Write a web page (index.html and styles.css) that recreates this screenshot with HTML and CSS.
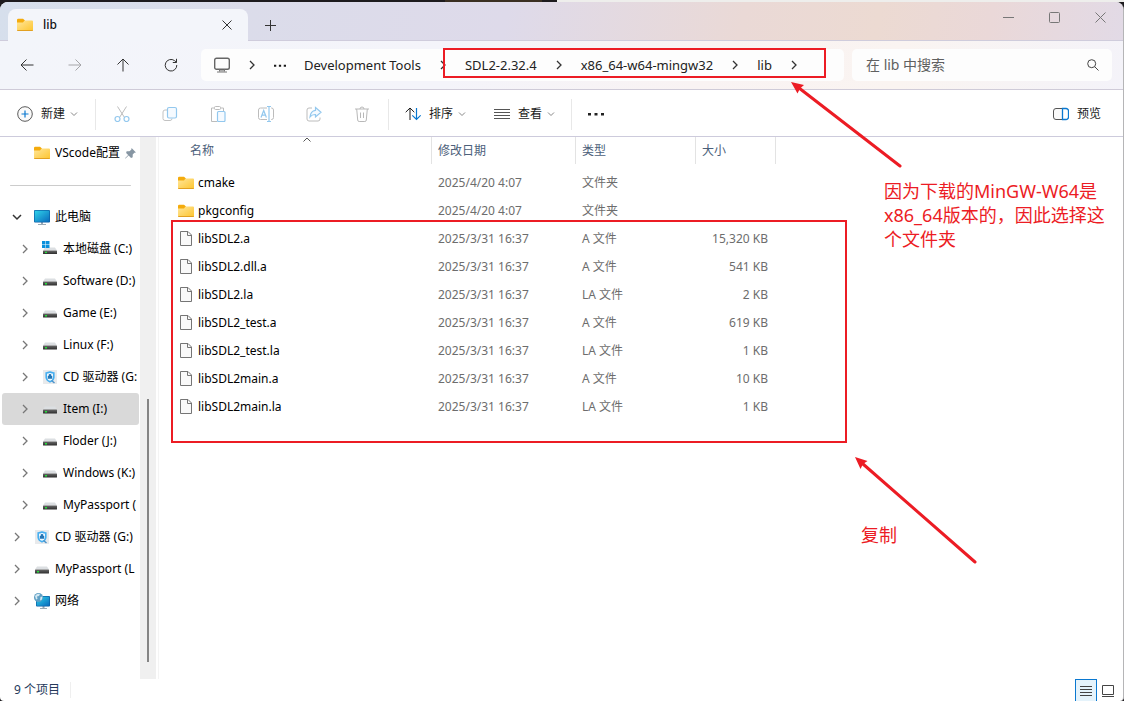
FILE: index.html
```html
<!DOCTYPE html>
<html lang="zh-CN">
<head>
<meta charset="utf-8">
<title>lib</title>
<link rel="stylesheet" href="styles.css">
</head>
<body>
<svg class="defs" aria-hidden="true">
  <defs>
    <linearGradient id="gFolder" x1="0" y1="0" x2="1" y2="1"><stop offset="0" stop-color="#ffe69c"/><stop offset="1" stop-color="#fdc52e"/></linearGradient>
    <linearGradient id="gScreen" x1="0" y1="0" x2="1" y2="1"><stop offset="0" stop-color="#2fd3ea"/><stop offset="1" stop-color="#0a6bbd"/></linearGradient>
    <linearGradient id="gDrive" x1="0" y1="0" x2="0" y2="1"><stop offset="0" stop-color="#6a6a6a"/><stop offset="1" stop-color="#2c2c2c"/></linearGradient>
    <symbol id="folder" viewBox="0 0 16 16"><path d="M0 3a1.200 1.200 0 0 1 1.200-1.200H6L8 3.500v4H0z" fill="#f4ab0c"/><path d="M0 5.500h6L7.500 3.500H15a1 1 0 0 1 1 1V13a1 1 0 0 1-1 1H1a1 1 0 0 1-1-1z" fill="url(#gFolder)"/><path d="M0 13a1 1 0 0 0 1 1h14a1 1 0 0 0 1-1z" fill="#e2a021"/></symbol>
    <symbol id="file" viewBox="0 0 16 16"><path d="M2.500.500h7.500l3.500 3.500v10.500h-11z" fill="#f9f9f9" stroke="#757575"/><path d="M9.500.500v4h4" fill="none" stroke="#757575"/></symbol>
    <symbol id="drive" viewBox="0 0 16 16"><path d="M3 5.500h10l2 3H1z" fill="#dcdfe2"/><rect x="1" y="8.500" width="14" height="4" rx=".5" fill="url(#gDrive)"/><rect x="3" y="10" width="2" height="1.500" fill="#25e03a"/></symbol>
    <symbol id="sysdrive" viewBox="0 0 16 16"><path d="M3 6.500h10l2 3H1z" fill="#dcdfe2"/><rect x="1" y="9.500" width="14" height="3.500" rx=".5" fill="url(#gDrive)"/><rect x="3" y="10.800" width="2" height="1.300" fill="#25e03a"/><path d="M0 0h3.500v3.200H0zM4 0h3.500v3.200H4zM0 3.800h3.500V7H0zM4 3.800h3.500V7H4z" fill="#0a90dc"/></symbol>
    <symbol id="disc" viewBox="0 0 16 16"><rect x="1" y="1" width="14" height="14" fill="#e8eaec"/><path d="M8 3q2 .8 3.800 1v4.500q-.3 3-3.800 4.300-3.500-1.300-3.800-4.300V4q1.800-.2 3.800-1z" fill="#eef8ff" stroke="#45aef0" stroke-width="1.600"/><path d="M6.600 6.500a1.400 1.400 0 0 1 2.800 0v.5h.8v2.800H5.800V7h.8z" fill="#2375b5"/><path d="M9.500 11.500l3 2.500" stroke="#4b92c9" stroke-width="1.500"/></symbol>
    <symbol id="monitor" viewBox="0 0 16 16"><path d="M7 13h2v2h3v1H4v-1h3z" fill="#9aa9b5"/><rect y="1" width="16" height="12.500" rx="1" fill="#0b5fa5"/><rect x=".7" y="1.700" width="14.600" height="11.100" fill="url(#gScreen)"/></symbol>
    <symbol id="network" viewBox="0 0 16 16"><path d="M8.500 13h2v2h2.500v1H6v-1h2.500z" fill="#9aa9b5"/><rect x="2" y="3" width="14" height="10.500" rx="1" fill="#0b5fa5"/><rect x="2.700" y="3.700" width="12.600" height="9.100" fill="url(#gScreen)"/><circle cx="4.500" cy="4.500" r="4.500" fill="#5f9fc4"/><path d="M1 3q2-3 5-2L5 3 3 3.500 3.500 6 2 6.500zM6.500 4l2-.5-.5 3-2 1z" fill="#d3e8f2"/></symbol>
    <symbol id="right" viewBox="0 0 8 10"><path d="M2 1l4 4-4 4" fill="none" stroke="currentColor" stroke-width="1.300"/></symbol>
    <symbol id="down" viewBox="0 0 8 8"><path d="M1 2.500l3 3 3-3" fill="none" stroke="currentColor"/></symbol>
    <symbol id="dots" viewBox="0 0 16 4"><path d="M0 1h3v2.500H0zM6.500 1h3v2.500h-3zM13 1h3v2.500h-3z" fill="currentColor"/></symbol>
  </defs>
</svg>

<div class="backdrop"></div>
<div class="window">
  <header class="titlebar">
    <div class="tab">
      <svg class="i16"><use href="#folder"/></svg>
      <span class="tab-name">lib</span>
      <button class="plain" aria-label="关闭标签页"><svg width="10" height="10" viewBox="0 0 10 10"><path d="M.5.5l9 9m0-9l-9 9" class="ln"/></svg></button>
    </div>
    <button class="plain newtab" aria-label="新建标签页"><svg width="11" height="11" viewBox="0 0 11 11"><path d="M5.500 0v11M0 5.500h11" class="ln"/></svg></button>
    <div class="controls">
      <button class="plain" aria-label="最小化"><svg width="11" height="11" viewBox="0 0 11 11"><path d="M0 5.500h11" class="ln"/></svg></button>
      <button class="plain" aria-label="最大化"><svg width="11" height="11" viewBox="0 0 11 11"><rect x=".5" y=".5" width="10" height="10" rx="1" class="ln"/></svg></button>
      <button class="plain" aria-label="关闭"><svg width="11" height="11" viewBox="0 0 11 11"><path d="M.5.5l10 10m0-10l-10 10" class="ln"/></svg></button>
    </div>
  </header>

  <div class="navbar">
    <button class="plain nav" aria-label="后退"><svg width="14" height="14" viewBox="0 0 14 14"><path d="M6.500 1.500L1 7l5.500 5.500M1 7h12.500" class="ln"/></svg></button>
    <button class="plain nav off" aria-label="前进"><svg width="14" height="14" viewBox="0 0 14 14"><path d="M7.500 1.500L13 7l-5.500 5.500M13 7H.5" class="ln"/></svg></button>
    <button class="plain nav" aria-label="向上"><svg width="14" height="14" viewBox="0 0 14 14"><path d="M1.500 6.500L7 1l5.500 5.500M7 1v12.500" class="ln"/></svg></button>
    <button class="plain nav" aria-label="刷新"><svg width="14" height="14" viewBox="0 0 14 14"><path d="M12.800 7A5.800 5.800 0 1 1 10.500 2.600L12.500 4.200M12.500.8v3.700H8.800" class="ln"/></svg></button>
    <nav class="address" aria-label="地址">
      <svg class="pc" viewBox="0 0 16 16"><rect x=".7" y="1.200" width="14.600" height="11.100" rx="1.800" fill="none" stroke="#666" stroke-width="1.400"/><path d="M5.500 12.500v2M10.500 12.500v2M3 15h10" stroke="#777" fill="none"/><path d="M6 13h4v2H6z" fill="#aaa"/></svg>
      <svg class="sep"><use href="#right"/></svg>
      <svg class="ell"><use href="#dots"/></svg>
      <a href="#dev">Development Tools</a>
      <svg class="sep"><use href="#right"/></svg>
      <a href="#sdl">SDL2-2.32.4</a>
      <svg class="sep"><use href="#right"/></svg>
      <a href="#mingw">x86_64-w64-mingw32</a>
      <svg class="sep"><use href="#right"/></svg>
      <a href="#lib">lib</a>
      <svg class="sep"><use href="#right"/></svg>
    </nav>
    <label class="search">
      <input type="text" placeholder="在 lib 中搜索" aria-label="搜索">
      <svg width="12" height="12" viewBox="0 0 12 12"><circle cx="4.700" cy="4.700" r="4" class="ln"/><path d="M7.700 7.700l3.800 3.800" class="ln"/></svg>
    </label>
  </div>

  <div class="toolbar">
    <button class="plain cmd new"><svg class="i16" viewBox="0 0 16 16"><circle cx="8" cy="8" r="7.300" fill="#fafafa" stroke="#5a5a5a"/><path d="M8 4.500v7M4.500 8h7" stroke="#0a78d0" stroke-width="1.200"/></svg>新建<svg class="dn"><use href="#down"/></svg></button>
    <span class="bar"></span>
    <div class="tools">
      <button class="plain" aria-label="剪切"><svg class="i16" viewBox="0 0 16 16"><path d="M3.500.5L10.500 11.500M12.500.5L5.500 11.500" stroke="#bcbcbc" fill="none"/><g stroke="#93c8ee" stroke-width="1.200" fill="#fff"><circle cx="3.500" cy="13" r="2.500"/><circle cx="12.500" cy="13" r="2.500"/></g></svg></button>
      <button class="plain" aria-label="复制"><svg class="i16" viewBox="0 0 16 16"><path d="M5 4H3a2 2 0 0 0-2 2v6.500a2 2 0 0 0 2 2h5a2 2 0 0 0 2-2" stroke="#c2c2c2" fill="none"/><rect x="5.500" y="1.500" width="9" height="10.500" rx="1.500" stroke="#93c8ee" stroke-width="1.200" fill="#f5faff"/></svg></button>
      <button class="plain" aria-label="粘贴"><svg class="i16" viewBox="0 0 16 16"><path d="M5 2H1.500v13.500H7M10 2h3.500v3" stroke="#bcbcbc" fill="none"/><rect x="4.500" y=".5" width="6" height="3" rx="1" stroke="#bcbcbc" fill="#fff"/><rect x="7.500" y="5.500" width="7.500" height="10" rx="1" stroke="#93c8ee" stroke-width="1.200" fill="#f5faff"/></svg></button>
      <button class="plain" aria-label="重命名"><svg class="i16" viewBox="0 0 16 16"><path d="M9 2H2.500a2 2 0 0 0-2 2v7.500a2 2 0 0 0 2 2H9M13 2h.5a2 2 0 0 1 2 2v7.500a2 2 0 0 1-2 2H13" stroke="#bcbcbc" fill="none"/><path d="M11 .5v15M9 .5h4M9 15.500h4M3 11.500L5.700 4.500 8.400 11.500M4 9.200h3.500" stroke="#93c8ee" stroke-width="1.200" fill="none"/></svg></button>
      <button class="plain" aria-label="共享"><svg class="i16" viewBox="0 0 16 16"><path d="M6 2H3a2 2 0 0 0-2 2v9a2 2 0 0 0 2 2h9a2 2 0 0 0 2-2v-1.500" stroke="#bcbcbc" fill="none"/><path d="M9.500 1.500L15 6.300 9.500 11V8.500Q6 8.300 4 11 4.500 5 9.500 4.300z" stroke="#93c8ee" stroke-width="1.200" fill="#f5faff"/></svg></button>
      <button class="plain" aria-label="删除"><svg class="i16" viewBox="0 0 16 16"><path d="M1 3h14M6 3a2 2 0 0 1 4 0M2.700 3l1 11a1.500 1.500 0 0 0 1.500 1.500h5.600a1.500 1.500 0 0 0 1.500-1.500l1-11M6.500 6.500v5.500M9.500 6.500v5.500" stroke="#b8b8b8" fill="none"/></svg></button>
    </div>
    <span class="bar"></span>
    <button class="plain cmd sort"><svg class="i16" viewBox="0 0 16 16"><path d="M5 14V2M.7 6.200L5 2l4.300 4.200" class="ln"/><path d="M11.500 2v11.500M7.300 9.300l4.200 4.200 4.200-4.200" stroke="#0a78d0" stroke-width="1.200" fill="none"/></svg>排序<svg class="dn"><use href="#down"/></svg></button>
    <button class="plain cmd view"><svg class="i16" viewBox="0 0 16 16"><path d="M0 3.500h16M0 6.500h16M0 9.500h16M0 12.500h16" stroke="#555"/></svg>查看<svg class="dn"><use href="#down"/></svg></button>
    <span class="bar"></span>
    <button class="plain more" aria-label="更多"><svg width="16" height="4"><use href="#dots"/></svg></button>
    <button class="plain cmd preview"><svg class="i16" viewBox="0 0 16 16"><path d="M9 2.500H3a2.500 2.500 0 0 0-2.500 2.500v6A2.500 2.500 0 0 0 3 13.500h6" stroke="#555" fill="#fafafa"/><path d="M9.500 2.500H13a2.500 2.500 0 0 1 2.500 2.500v6a2.500 2.500 0 0 1-2.500 2.500H9.500z" stroke="#0a78d0" stroke-width="1.300" fill="#fff"/></svg>预览</button>
  </div>

  <div class="content">
    <aside class="side">
      <ul class="tree">
        <li class="top quick"><svg class="i16"><use href="#folder"/></svg><span>VScode配置</span><svg class="pin" viewBox="0 0 10 10"><path d="M6 0l4 4-1.500.3L7 6v2.500L5.500 9 3.300 6.800.5 9.500 0 9.300l2.900-2.900L1 4.500 1.500 3 4 3l1.700-1.500z" fill="#8796a3"/></svg></li>
        <li class="rule"></li>
        <li class="top"><svg class="ch dk" viewBox="0 0 10 10"><path d="M1 3l4 4 4-4" fill="none" stroke="#333" stroke-width="1.500"/></svg><svg class="i16"><use href="#monitor"/></svg><span>此电脑</span></li>
        <li><svg class="ch"><use href="#right"/></svg><svg class="i16"><use href="#sysdrive"/></svg><span>本地磁盘 (C:)</span></li>
        <li><svg class="ch"><use href="#right"/></svg><svg class="i16"><use href="#drive"/></svg><span>Software (D:)</span></li>
        <li><svg class="ch"><use href="#right"/></svg><svg class="i16"><use href="#drive"/></svg><span>Game (E:)</span></li>
        <li><svg class="ch"><use href="#right"/></svg><svg class="i16"><use href="#drive"/></svg><span>Linux (F:)</span></li>
        <li><svg class="ch"><use href="#right"/></svg><svg class="i16"><use href="#disc"/></svg><span>CD 驱动器 (G:</span></li>
        <li class="sel"><svg class="ch"><use href="#right"/></svg><svg class="i16"><use href="#drive"/></svg><span>Item (I:)</span></li>
        <li><svg class="ch"><use href="#right"/></svg><svg class="i16"><use href="#drive"/></svg><span>Floder (J:)</span></li>
        <li><svg class="ch"><use href="#right"/></svg><svg class="i16"><use href="#drive"/></svg><span>Windows (K:)</span></li>
        <li><svg class="ch"><use href="#right"/></svg><svg class="i16"><use href="#drive"/></svg><span>MyPassport (</span></li>
        <li class="top"><svg class="ch"><use href="#right"/></svg><svg class="i16"><use href="#disc"/></svg><span>CD 驱动器 (G:)</span></li>
        <li class="top"><svg class="ch"><use href="#right"/></svg><svg class="i16"><use href="#drive"/></svg><span>MyPassport (L</span></li>
        <li class="top"><svg class="ch"><use href="#right"/></svg><svg class="i16"><use href="#network"/></svg><span>网络</span></li>
      </ul>
      <div class="scroll"><span class="thumb"></span></div>
    </aside>

    <main class="files">
      <table>
        <colgroup><col class="c-name"><col class="c-date"><col class="c-type"><col class="c-size"></colgroup>
        <thead><tr><th>名称<svg class="asc" viewBox="0 0 8 5"><path d="M.5 4.500L4 1l3.500 3.500" class="ln"/></svg></th><th>修改日期</th><th>类型</th><th>大小</th></tr></thead>
        <tbody>
          <tr><td><svg class="i16"><use href="#folder"/></svg>cmake</td><td>2025/4/20 4:07</td><td>文件夹</td><td></td></tr>
          <tr><td><svg class="i16"><use href="#folder"/></svg>pkgconfig</td><td>2025/4/20 4:07</td><td>文件夹</td><td></td></tr>
          <tr><td><svg class="i16"><use href="#file"/></svg>libSDL2.a</td><td>2025/3/31 16:37</td><td>A 文件</td><td>15,320 KB</td></tr>
          <tr><td><svg class="i16"><use href="#file"/></svg>libSDL2.dll.a</td><td>2025/3/31 16:37</td><td>A 文件</td><td>541 KB</td></tr>
          <tr><td><svg class="i16"><use href="#file"/></svg>libSDL2.la</td><td>2025/3/31 16:37</td><td>LA 文件</td><td>2 KB</td></tr>
          <tr><td><svg class="i16"><use href="#file"/></svg>libSDL2_test.a</td><td>2025/3/31 16:37</td><td>A 文件</td><td>619 KB</td></tr>
          <tr><td><svg class="i16"><use href="#file"/></svg>libSDL2_test.la</td><td>2025/3/31 16:37</td><td>LA 文件</td><td>1 KB</td></tr>
          <tr><td><svg class="i16"><use href="#file"/></svg>libSDL2main.a</td><td>2025/3/31 16:37</td><td>A 文件</td><td>10 KB</td></tr>
          <tr><td><svg class="i16"><use href="#file"/></svg>libSDL2main.la</td><td>2025/3/31 16:37</td><td>LA 文件</td><td>1 KB</td></tr>
        </tbody>
      </table>
    </main>
  </div>

  <footer class="status">
    <span class="count">9 个项目</span>
    <button class="plain mode on" aria-label="详细信息"><svg width="12" height="12" viewBox="0 0 12 12"><path d="M0 1.500h12M0 4.500h12M0 7.500h12M0 10.500h12" stroke="#444"/></svg></button>
    <button class="plain mode" aria-label="大图标"><svg width="12" height="12" viewBox="0 0 12 12"><path d="M.5.5h11v9H.5zM0 11.500h12" stroke="#444" fill="none"/></svg></button>
  </footer>
</div>

<div class="mark mark-path"></div>
<div class="mark mark-files"></div>
<svg class="arrows" width="1124" height="701" viewBox="0 0 1124 701" aria-hidden="true">
  <g stroke="#ec1c24" stroke-width="3" stroke-linecap="round"><path d="M799 88L900 166M863 464L975 562"/></g>
  <path d="M791 82l13 3-4 3.500-2.500 5zM855 457l12.500 4-4.500 3-2.500 5z" fill="#ec1c24"/>
</svg>
<p class="note note-arch">因为下载的MinGW-W64是<br>x86_64版本的，因此选择这<br>个文件夹</p>
<p class="note note-copy">复制</p>
</body>
</html>
```

FILE: styles.css
```css
* { box-sizing: border-box; }
body {
  margin: 0;
  height: 100vh;
  display: flex;
  flex-direction: column;
  position: relative;
  overflow: hidden;
  background: #1d1b1e;
  color: #1a1a1a;
  font: 12px/16px "Noto Sans", "Noto Sans CJK SC", sans-serif;
}
.defs { position: absolute; width: 0; height: 0; }
svg { display: block; flex: none; }
.i16 { width: 16px; height: 16px; }
.ln { fill: none; stroke: currentColor; stroke-width: 1; }
.plain {
  display: flex;
  align-items: center;
  justify-content: center;
  padding: 0;
  border: 0;
  background: none;
  color: #333;
  font: inherit;
}

.backdrop {
  height: 2px;
  flex: none;
  background: linear-gradient(90deg, #1d1b1e 445px, #3a2f22 445px 542px, #1d1b1e 542px 557px, #eeeeec 557px);
}
.window {
  flex: 1;
  min-height: 0;
  display: flex;
  flex-direction: column;
  overflow: hidden;
  border-right: 1px solid #b5b5b7;
  border-radius: 8px 8px 4px 4px;
  background: #fff;
}

.titlebar {
  display: flex;
  height: 39px;
  flex: none;
  padding: 7px 0 0 8px;
  background: linear-gradient(100deg, #d6dfec, #dbdcea 22%, #dedaea 45%, #ead9d6 66%, #ecdad2 78%, #ead8d8 88%, #e2dae6);
  box-shadow: inset 0 -1px #cfccdc;
}
.tab {
  display: flex;
  align-items: center;
  width: 240px;
  padding: 0 16px 0 9px;
  border-radius: 8px 8px 0 0;
  background: #f3f5fa;
}
.tab-name { flex: 1; margin-left: 10px; color: #111; font-weight: 500; }
.newtab { width: 45px; }
.controls { display: flex; height: 30px; margin: -7px 0 0 auto; }
.controls .plain { width: 46px; color: #777; }

.navbar {
  display: flex;
  align-items: center;
  height: 49px;
  flex: none;
  padding: 0 11px 0 3px;
  border-bottom: 1px solid #cfcbd8;
  background: linear-gradient(100deg, #f3f5fa, #f4f4fa 40%, #f9f3f3 62%, #faf4f1 80%, #f4f3f9);
}
.nav { width: 48px; height: 32px; }
.off { color: #a5a5a8; }
.address {
  display: flex;
  align-items: center;
  flex: 1;
  height: 32px;
  margin: 0 8px 0 6px;
  padding-left: 13px;
  border-radius: 5px;
  background: #fdfdfd;
  font-size: 13px;
  white-space: nowrap;
  overflow: hidden;
}
.address a { color: #222; text-decoration: none; }
.sep { width: 8px; height: 10px; margin: 0 18px; color: #333; }
.pc { width: 16px; height: 16px; }
.ell { width: 12px; height: 3px; margin-right: 18px; }
.search {
  display: flex;
  align-items: center;
  width: 260px;
  height: 32px;
  padding: 0 13px 0 14px;
  border-radius: 5px;
  background: #fdfdfd;
  color: #444;
}
.search input {
  flex: 1;
  min-width: 0;
  padding: 0;
  border: 0;
  outline: 0;
  background: none;
  font: 14px/20px "Noto Sans", "Noto Sans CJK SC", sans-serif;
}
.search input::placeholder { color: #606060; opacity: 1; }

.toolbar {
  display: flex;
  align-items: center;
  height: 47px;
  flex: none;
  padding: 2px 22px 0 17px;
  border-bottom: 1px solid #cdcbdc;
}
.cmd { color: #1a1a1a; gap: 8px; }
.dn { width: 8px; height: 8px; color: #888; margin-left: -3px; }
.bar { width: 1px; height: 31px; background: #e8e8e8; }
.new { margin-right: 17px; }
.tools { display: flex; margin: 0 2px; }
.tools .plain { width: 48px; height: 32px; }
.sort { margin: 0 28px 0 16px; }
.view { margin-right: 16px; }
.more { margin-left: 16px; color: #222; }
.preview { margin-left: auto; }

.content { display: flex; flex: 1; min-height: 0; }
.side { display: flex; width: 156px; flex: none; }
.tree {
  width: 140px;
  margin: 0;
  padding: 0 1px 0 2px;
  overflow: hidden;
  list-style: none;
  color: #000;
  white-space: nowrap;
}
.tree li {
  display: flex;
  align-items: center;
  height: 32px;
  padding-left: 19px;
  border-radius: 3px;
}
.tree .top { padding-left: 11px; }
.tree .quick { padding-left: 32px; }
.tree .sel { background: #d9d9d9; }
.tree .rule { height: 1px; margin: 16px 8px 15px; background: #ccc; }
.tree span { margin-left: 5px; }
.ch { width: 8px; height: 10px; margin-right: 13px; color: #777; }
.dk { width: 10px; margin: 0 12px 0 -1px; }
.pin { width: 11px; height: 11px; margin-left: 5px; }
.scroll { width: 16px; background: #f0f0f0; display: flex; padding: 262px 0 17px 7px; }
.thumb { width: 2px; background: #858585; }

.files { flex: 1; min-width: 0; margin-left: 2px; border-left: 1px solid #f4f4f4; }
table { width: 617px; table-layout: fixed; border-collapse: separate; border-spacing: 0; }
.c-name { width: 273px; }
.c-date { width: 144px; }
.c-type { width: 120px; }
.c-size { width: 80px; }
th {
  position: relative;
  height: 27px;
  padding: 0 6px;
  border-right: 1px solid #e3e3e3;
  color: #4c607a;
  font-weight: 400;
  text-align: left;
}
th:first-child { padding-left: 31px; }
.asc { position: absolute; top: 0; left: 50%; width: 8px; height: 5px; margin-left: 8px; color: #555; }
tbody::before { content: ""; display: block; height: 5px; }
td { height: 28px; padding: 0 6px; color: #6d6d6d; }
td:first-child { display: flex; align-items: center; gap: 4px; padding-left: 19px; color: #000; }
td:last-child { padding-right: 8px; text-align: right; }

.status { display: flex; align-items: center; height: 22px; flex: none; padding: 0 4px 0 14px; color: #25395b; }
.count { margin-right: auto; padding-right: 10px; border-right: 1px solid #efefef; }
.mode { width: 22px; height: 22px; border: 1px solid transparent; border-bottom: 0; }
.mode.on { border-color: #0a78d0; background: #e5f3fb; }

.mark { position: absolute; border: 2px solid #ec1c24; }
.mark-path { left: 443px; top: 48px; width: 383px; height: 30px; }
.mark-files { left: 171px; top: 220px; width: 676px; height: 223px; }
.arrows { position: absolute; left: 0; top: 0; pointer-events: none; }
.note { position: absolute; margin: 0; color: #ec1c24; font-size: 18px; line-height: 24px; white-space: nowrap; }
.note-arch { left: 884px; top: 179px; }
.note-copy { left: 861px; top: 523px; }
```
